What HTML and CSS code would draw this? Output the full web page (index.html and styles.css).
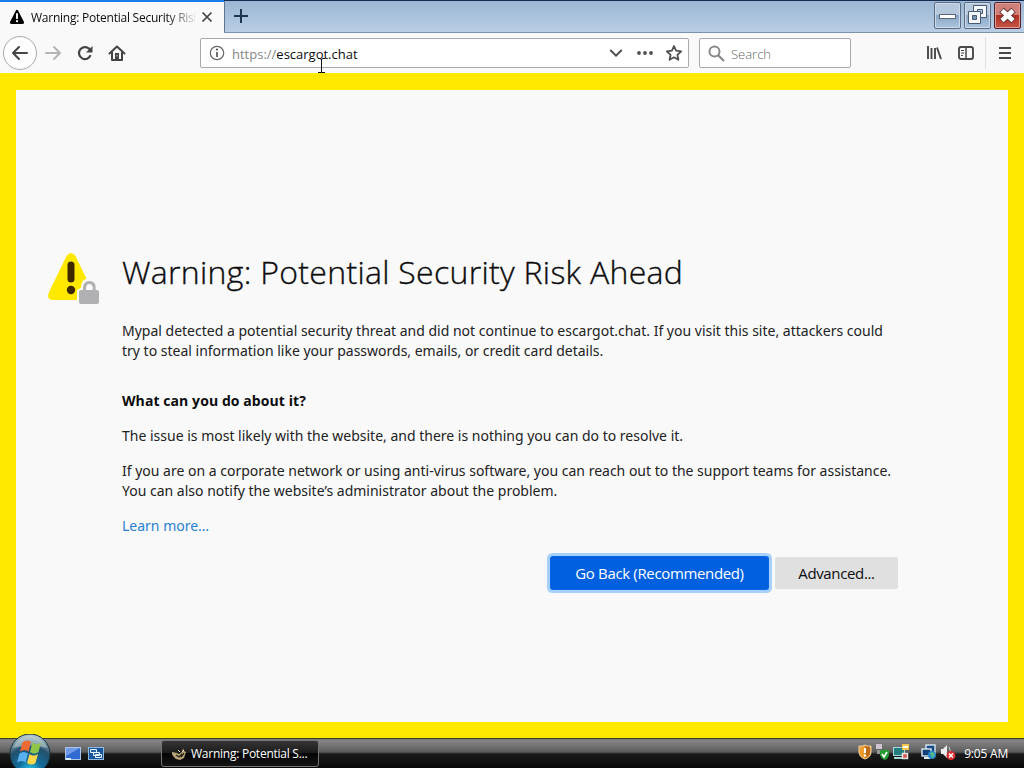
FILE: index.html
```html
<!DOCTYPE html>
<html lang="en">
<head>
  <meta charset="UTF-8">
  <title>Warning: Potential Security Risk Ahead</title>
  <link rel="stylesheet" href="styles.css">
</head>
<body>

  <header class="browser">
    <div class="titlebar">
      <div class="tab">
        <svg class="tab-icon" width="16" height="16" viewBox="0 0 16 16"><path d="M6.8 1.7Q8 0 9.2 1.7L15 13Q15.5 15 13.5 15H2.5Q.5 15 1 13Z" fill="#000"/><path d="M8 5v4.3" stroke="#fff" stroke-width="1.9" stroke-linecap="round"/><circle cx="8" cy="12.2" r="1.1" fill="#fff"/></svg>
        <span class="tab-title">Warning: Potential Security Risk</span>
        <svg class="tab-close" width="12" height="12" viewBox="0 0 12 12"><path d="M1.5 1.5l9 9M10.5 1.5l-9 9" stroke="#444" stroke-width="1.7"/></svg>
      </div>
      <div class="new-tab">
        <svg width="16" height="16" viewBox="0 0 16 16"><path d="M8 1v14M1 8h14" stroke="#20364f" stroke-width="2"/></svg>
      </div>
      <div class="window-buttons">
        <div class="win-btn"><svg width="27" height="27" viewBox="0 0 27 27"><rect x="5.500" y="12.500" width="16" height="4" fill="#fff" stroke="#59677a"/></svg></div>
        <div class="win-btn"><svg width="27" height="27" viewBox="0 0 27 27"><g fill="#f4f8fc" stroke="#4b5c72"><path fill-rule="evenodd" d="M9.500 3.500h13v12h-13zM13.500 7.500h5v4h-5z"/><path fill-rule="evenodd" d="M4.500 9.500h12v12h-12zM8.500 13.500h4v4h-4z"/></g><path d="M9 14h3v3H9z" fill="#7d98b5"/></svg></div>
        <div class="win-btn win-close"><svg width="27" height="27" viewBox="0 0 27 27"><path d="M7.500 8l12 11M19.500 8l-12 11" stroke="#69343a" stroke-width="6.500"/><path d="M8 8.500l11 10M19 8.500l-11 10" stroke="#fff" stroke-width="4.500"/></svg></div>
      </div>
    </div>

    <nav class="toolbar">
      <div class="back"><svg width="18" height="18" viewBox="0 0 18 18" fill="none" stroke="#444" stroke-width="2" stroke-linecap="round" stroke-linejoin="round"><path d="M16 9H2M8 3L2 9l6 6"/></svg></div>
      <svg class="forward" width="18" height="18" viewBox="0 0 18 18" fill="none" stroke="#b5b5b5" stroke-width="2" stroke-linecap="round" stroke-linejoin="round"><path d="M2 9h14M10 3l6 6-6 6"/></svg>
      <svg class="reload" width="18" height="18" viewBox="0 0 18 18"><path d="M14.600 11.200A6 6 0 1 1 13 4.600l1.500 1.400" fill="none" stroke="#444" stroke-width="2.200"/><path d="M16.500 2v6.500H10z" fill="#444"/></svg>
      <svg class="home" width="18" height="18" viewBox="0 0 18 18"><path d="M1.500 9.500L9 2.500l7.500 7M4 8.500v7.500h10V8.500" fill="none" stroke="#444" stroke-width="2" stroke-linecap="round" stroke-linejoin="round"/><path d="M7 9h4v6H7z" fill="#444"/><path d="M9 11v1.500" stroke="#ddd"/></svg>

      <div class="urlbar">
        <svg width="16" height="16" viewBox="0 0 16 16"><circle cx="8" cy="8" r="6.700" fill="none" stroke="#666" stroke-width="1.200"/><path d="M8 7v5" stroke="#555" stroke-width="1.700"/><circle cx="8" cy="4.600" r="1.100" fill="#555"/></svg>
        <span class="url"><span class="scheme">https://</span>escargot.chat</span>
        <div class="url-actions">
          <svg width="14" height="16" viewBox="0 0 14 16"><path d="M1.800 5.500L7 10.700l5.200-5.200" fill="none" stroke="#505050" stroke-width="2" stroke-linecap="round"/></svg>
          <svg width="16" height="16" viewBox="0 0 16 16" fill="#505050"><circle cx="2" cy="8" r="1.900"/><circle cx="8" cy="8" r="1.900"/><circle cx="14" cy="8" r="1.900"/></svg>
          <svg width="18" height="18" viewBox="0 0 18 18"><path d="M9 2l2.100 4.700 5.100.6-3.800 3.500 1 5L9 13.300l-4.400 2.500 1-5-3.800-3.500 5.100-.6z" fill="none" stroke="#505050" stroke-width="1.800" stroke-linejoin="round"/></svg>
        </div>
      </div>

      <div class="searchbar">
        <svg width="17" height="17" viewBox="0 0 17 17"><circle cx="6.500" cy="6.500" r="5" fill="none" stroke="#888" stroke-width="2"/><path d="M10 10l6 6" stroke="#888" stroke-width="2.200"/></svg>
        <span>Search</span>
      </div>

      <div class="tools">
        <svg width="16" height="16" viewBox="0 0 16 16" stroke="#484848" stroke-width="1.900"><path d="M2 1v13M5.500 3v11M9 3v11M11 2.500L15 14"/></svg>
        <svg width="16" height="16" viewBox="0 0 16 16"><rect x="1" y="2" width="14" height="12" rx="2" fill="none" stroke="#484848" stroke-width="1.900"/><path d="M8 2v12" stroke="#484848" stroke-width="1.500"/><path d="M3 5.500h3M3 8h3M3 10.500h2" stroke="#484848"/></svg>
        <div class="menu"><svg width="12" height="12" viewBox="0 0 12 12" stroke="#484848" stroke-width="2"><path d="M0 1h12M0 6h12M0 11h12"/></svg></div>
      </div>
    </nav>
    <svg class="cursor" width="9" height="16" viewBox="0 0 9 16"><path d="M1 .5h2l1.500 1L6 .5h2M4.500 1v13M1 14.500h7" fill="none" stroke="#111"/></svg>
  </header>

  <main class="page">
    <section class="warning">
      <svg class="warning-icon" width="52" height="54" viewBox="0 0 52 54">
        <path d="M18.500 4Q23 -2 27.500 4L45 40Q48 48 40 48H5Q-2 48 1 40Z" fill="#ffe900"/>
        <path d="M23 13v14" stroke="#3e2800" stroke-width="7" stroke-linecap="round"/>
        <circle cx="23" cy="38" r="4.200" fill="#3e2800"/>
        <path d="M29 54V38l4-2q0-10 9-10 12 0 12 10v18z" fill="#f9f9fa"/>
        <path d="M36.500 40v-3.500c0-4 2-6 5-6s4.500 2 4.500 5V40" fill="none" stroke="#b1b1b3" stroke-width="3.200"/>
        <path d="M42 34.500h2.500v3H42z" fill="#f9f9fa"/>
        <rect x="31" y="38" width="20" height="14" rx="2" fill="#b1b1b3"/>
      </svg>
      <div class="warning-text">
        <h1>Warning: Potential Security Risk Ahead</h1>
        <p class="intro">Mypal detected a potential security threat and did not continue to escargot.chat. If you visit this site, attackers could<br>try to steal information like your passwords, emails, or credit card details.</p>
        <h2>What can you do about it?</h2>
        <p>The issue is most likely with the website, and there is nothing you can do to resolve it.</p>
        <p>If you are on a corporate network or using anti-virus software, you can reach out to the support teams for assistance.<br>You can also notify the website’s administrator about the problem.</p>
        <p><a href="#">Learn more…</a></p>
        <div class="buttons">
          <button class="btn primary">Go Back (Recommended)</button>
          <button class="btn">Advanced...</button>
        </div>
      </div>
    </section>
  </main>

  <footer class="taskbar">
    <div class="start">
      <svg width="42" height="34" viewBox="0 0 42 34">
        <defs>
          <radialGradient id="orb" cx="50%" cy="95%" r="90%"><stop offset="0" stop-color="#30d5f7"/><stop offset=".35" stop-color="#126b9b"/><stop offset=".7" stop-color="#24506c"/><stop offset="1" stop-color="#a9c1c8"/></radialGradient>
        </defs>
        <circle cx="21" cy="20" r="20" fill="url(#orb)" stroke="#17303d"/>
        <path d="M4 14Q10 2 21 2t17 12Q21 9 4 14z" fill="#d6e2df" opacity=".45"/>
        <path d="M13.500 8.500q4-3.500 8.500-.5l-2.500 9.500q-4-3-8.500 0z" fill="#ee6a35"/>
        <path d="M23.500 8.500q4 3 8.500 0l-2.500 9.500q-4 3-8.500 0z" fill="#8fc64a"/>
        <path d="M10.500 19.500q4-3 8.500 0l-2.500 9q-4-3-8.500 0z" fill="#5bb0ee"/>
        <path d="M20.500 20q4 3 8.500 0l-2.500 9q-4 3-8.500 0z" fill="#ffd648"/>
      </svg>
    </div>
    <div class="quick-launch">
      <svg width="16" height="14" viewBox="0 0 16 14"><rect x=".5" y=".5" width="15" height="12" fill="#316bd1" stroke="#a9c6e6"/><path d="M1 1h14L1 9z" fill="#719bea"/><path d="M1 12h5" stroke="#d9f1ff" stroke-width="2"/></svg>
      <svg width="16" height="14" viewBox="0 0 16 14"><rect x=".5" y=".5" width="15" height="12" fill="#17559d" stroke="#8fb8df"/><path d="M2.500 2.500h6v3h-6zM5.500 5.500h6v3h-6zM7.500 7.500h6v3h-6z" fill="#2462a6" stroke="#e7f4ff"/></svg>
    </div>
    <div class="task">
      <svg width="16" height="14" viewBox="0 0 16 14"><path d="M1 5l5 1 2 1 3-2 1-4 1 3 2 1-2 6-4 2-4-1-3-3-1-2z" fill="#b6a477"/><path d="M5 8l3 2 3-3M10 10l3-4" fill="none" stroke="#292419" stroke-width="1.300"/><path d="M7 3l2 2M13 3l-2 2" stroke="#f3e7bd"/></svg>
      <span>Warning: Potential S...</span>
    </div>
    <div class="tray">
      <svg width="14" height="16" viewBox="0 0 14 16"><path d="M7 1q3 2 6 1v6q0 5-6 7-6-2-6-7V2q3 1 6-1z" fill="#ed9c2f" stroke="#f4d6a2"/><path d="M7 2v12q5-2 5-6V3z" fill="#bd6b17"/><path d="M7 4v5" stroke="#fff" stroke-width="2"/><circle cx="7" cy="11.500" r="1.200" fill="#fff"/></svg>
      <svg width="15" height="16" viewBox="0 0 15 16"><path d="M1 0h6v5H1z" fill="#d1c4d1"/><path d="M2 6h6v4H2z" fill="#8f9a92"/><path d="M5 6q3 1 5-1 2 2 4 1v5q-1 4-4 5-4-1-5-5z" fill="#249b31"/><path d="M7 10l2 3 3-5" fill="none" stroke="#fff" stroke-width="1.600"/></svg>
      <svg width="16" height="16" viewBox="0 0 16 16"><rect x=".5" y="3.500" width="11" height="8" fill="#247e81" stroke="#a8d9d9"/><path d="M1 14h9" stroke="#a8d9d9" stroke-width="2"/><rect x="9" y="0" width="7" height="6" fill="#f1c649"/><path d="M10 3h5" stroke="#fff" stroke-width="2"/><rect x="9.500" y="9.500" width="5" height="5" fill="#dc5550" stroke="#e4e4e4" stroke-width="1.500"/></svg>
      <svg class="network" width="16" height="16" viewBox="0 0 16 16"><rect x="5" y="1" width="9" height="8" fill="#164a87" stroke="#dbe8f2" stroke-width="1.400"/><rect x="1" y="5" width="9" height="7" fill="#123f75" stroke="#dbe8f2" stroke-width="1.400"/><path d="M3 14h6" stroke="#dbe8f2" stroke-width="2"/><circle cx="11" cy="11" r="4" fill="#2687cf"/><path d="M9 9l3-1 2 3-3 3z" fill="#51b983"/></svg>
      <svg width="16" height="16" viewBox="0 0 16 16"><path d="M1 5h2l4-4v13l-4-4H1z" fill="#eee"/><path d="M9 3q3 4 0 9" fill="none" stroke="#ccc"/><circle cx="11" cy="11.500" r="4.500" fill="#d92f32"/><path d="M9 9.500l4 4M13 9.500l-4 4" stroke="#fff" stroke-width="1.500"/></svg>
      <span class="clock">9:05 AM</span>
    </div>
  </footer>

</body>
</html>
```
FILE: styles.css
```css
* { box-sizing: border-box; }

body {
  margin: 0;
  width: 1024px;
  height: 768px;
  overflow: hidden;
  display: flex;
  flex-direction: column;
  font-family: "Open Sans", "Noto Sans", sans-serif;
  color: #0c0c0d;
}

svg {
  display: block;
  flex: none;
}

/* browser chrome */
.browser {
  position: relative;
  height: 73px;
  flex: none;
  background: #f9f9fa;
}

.titlebar {
  height: 33px;
  display: flex;
  background: linear-gradient(#9bb6d4, #b9cee3);
  border-top: 1px solid #172d51;
  border-bottom: 1px solid #7c93ad;
}

.tab {
  width: 224px;
  height: 33px;
  margin-top: -1px;
  padding: 0 11px 1px 9px;
  display: flex;
  align-items: center;
  background: #f9f9fa;
  border-top: 2px solid #1a7bea;
}

.tab-title {
  width: 164px;
  margin-left: 6px;
  overflow: hidden;
  white-space: nowrap;
  font-size: 12px;
  letter-spacing: -0.24px;
  -webkit-mask-image: linear-gradient(90deg, #000 135px, transparent 168px);
  mask-image: linear-gradient(90deg, #000 135px, transparent 168px);
}

.tab-close {
  margin-left: 6px;
}

.new-tab {
  width: 34px;
  padding: 7px 0 0 8px;
  border-left: 1px solid #61758c;
}

.window-buttons {
  display: flex;
  gap: 3px;
  margin: 1px 3px 0 auto;
}

.win-btn {
  width: 27px;
  height: 27px;
  display: flex;
  justify-content: center;
  align-items: center;
  background: linear-gradient(#b5c8dc 48%, #8ba6c3 50%, #abc5df);
  border: 1px solid #596c83;
  border-radius: 2px;
  box-shadow: inset 0 0 0 1px #cddbe9;
}

.win-close {
  background: linear-gradient(#d08079 48%, #b02c20 50%, #c95849);
  border-color: #532229;
  box-shadow: inset 0 0 0 1px #dc9e98;
}

.toolbar {
  height: 40px;
  display: flex;
  align-items: center;
  padding: 0 1px 0 3px;
}

.back {
  width: 34px;
  height: 34px;
  display: flex;
  align-items: center;
  justify-content: center;
  background: #fdfdfd;
  border: 1px solid #aaa;
  border-radius: 50%;
}

.forward { margin-left: 7px; }
.reload { margin-left: 14px; }
.home { margin-left: 14px; }

.urlbar,
.searchbar {
  height: 30px;
  display: flex;
  align-items: center;
  background: #fff;
  border: 1px solid #a9a9ae;
  border-radius: 2px;
  font-size: 13px;
}

.urlbar {
  width: 489px;
  margin-left: 74px;
  padding: 0 5px 0 8px;
}

.url {
  margin-left: 7px;
  padding-top: 2px;
}

.scheme { color: #858585; }

.url-actions {
  display: flex;
  align-items: center;
  margin-left: auto;
  gap: 12px;
}

.url-actions svg:first-child { margin-right: 2px; }

.searchbar {
  width: 152px;
  margin-left: 10px;
  padding-left: 8px;
  color: #666;
}

.searchbar span {
  margin-left: 6px;
  padding-top: 2px;
  font-weight: 300;
}

.tools {
  display: flex;
  align-items: center;
  gap: 16px;
  margin-left: auto;
}

.menu {
  height: 32px;
  width: 38px;
  margin-left: -5px;
  display: flex;
  align-items: center;
  padding-left: 13px;
  border-left: 1px solid #e1e1e3;
}

.cursor {
  position: absolute;
  left: 317px;
  top: 58px;
}

/* error page */
.page {
  height: 665px;
  flex: none;
  background: #f9f9fa;
  border: 16px solid #ffe900;
  border-top-width: 17px;
}

.warning {
  display: flex;
  padding: 162px 0 0 32px;
}

.warning-text {
  width: 776px;
  margin-left: 22px;
  white-space: nowrap;
}

h1 {
  margin: 0;
  height: 40px;
  font-size: 32px;
  line-height: 40px;
  font-weight: 300;
  letter-spacing: 0.3px;
  -webkit-text-stroke: 0.35px #0c0c0d;
}

h2 {
  margin: 30px 0 15px;
  font-size: 14px;
  line-height: 20px;
  font-weight: 700;
  letter-spacing: 0.08px;
}

p {
  margin: 0 0 15px;
  font-family: "Noto Sans", "Open Sans", sans-serif;
  font-size: 14px;
  line-height: 20px;
  color: #222;
}

.intro { margin-top: 29px; }

a {
  color: #2b7fd0;
  text-decoration: none;
}

.buttons {
  display: flex;
  justify-content: flex-end;
  gap: 7px;
  margin-top: 21px;
}

.btn {
  width: 123px;
  height: 32px;
  padding: 0;
  border: 0;
  border-radius: 2px;
  background: #e0e0e1;
  color: #0c0c0d;
  font: 15px "Open Sans", sans-serif;
  letter-spacing: -0.35px;
}

.primary {
  width: 217px;
  background: #0060df;
  color: #fff;
  box-shadow: 0 0 0 1px #0a65e4, 0 0 0 4px #a4d0fa;
}

/* taskbar */
.taskbar {
  position: relative;
  height: 30px;
  flex: none;
  display: flex;
  align-items: center;
  background: linear-gradient(#777 0, #858585 2px, #5b5b5b 13px, #1b1b1b 15px, #080808 100%);
  border-top: 1px solid #3d3c2b;
  color: #fff;
  font-size: 12px;
}

.start {
  position: absolute;
  left: 9px;
  top: -5px;
}

.quick-launch {
  display: flex;
  gap: 7px;
  margin-left: 65px;
}

.task {
  width: 158px;
  height: 27px;
  margin-left: 57px;
  padding-left: 9px;
  display: flex;
  align-items: center;
  gap: 4px;
  white-space: nowrap;
  background: linear-gradient(#353535, #1b1b1b 48%, #050505 50%, #141414);
  border: 1px solid #777;
  border-radius: 3px;
  letter-spacing: -0.25px;
}

.tray {
  display: flex;
  align-items: center;
  gap: 3px;
  margin: -3px 16px 0 auto;
}

.network { margin-left: 9px; }

.clock {
  margin: 2px 0 0 5px;
  letter-spacing: -0.2px;
}
```
